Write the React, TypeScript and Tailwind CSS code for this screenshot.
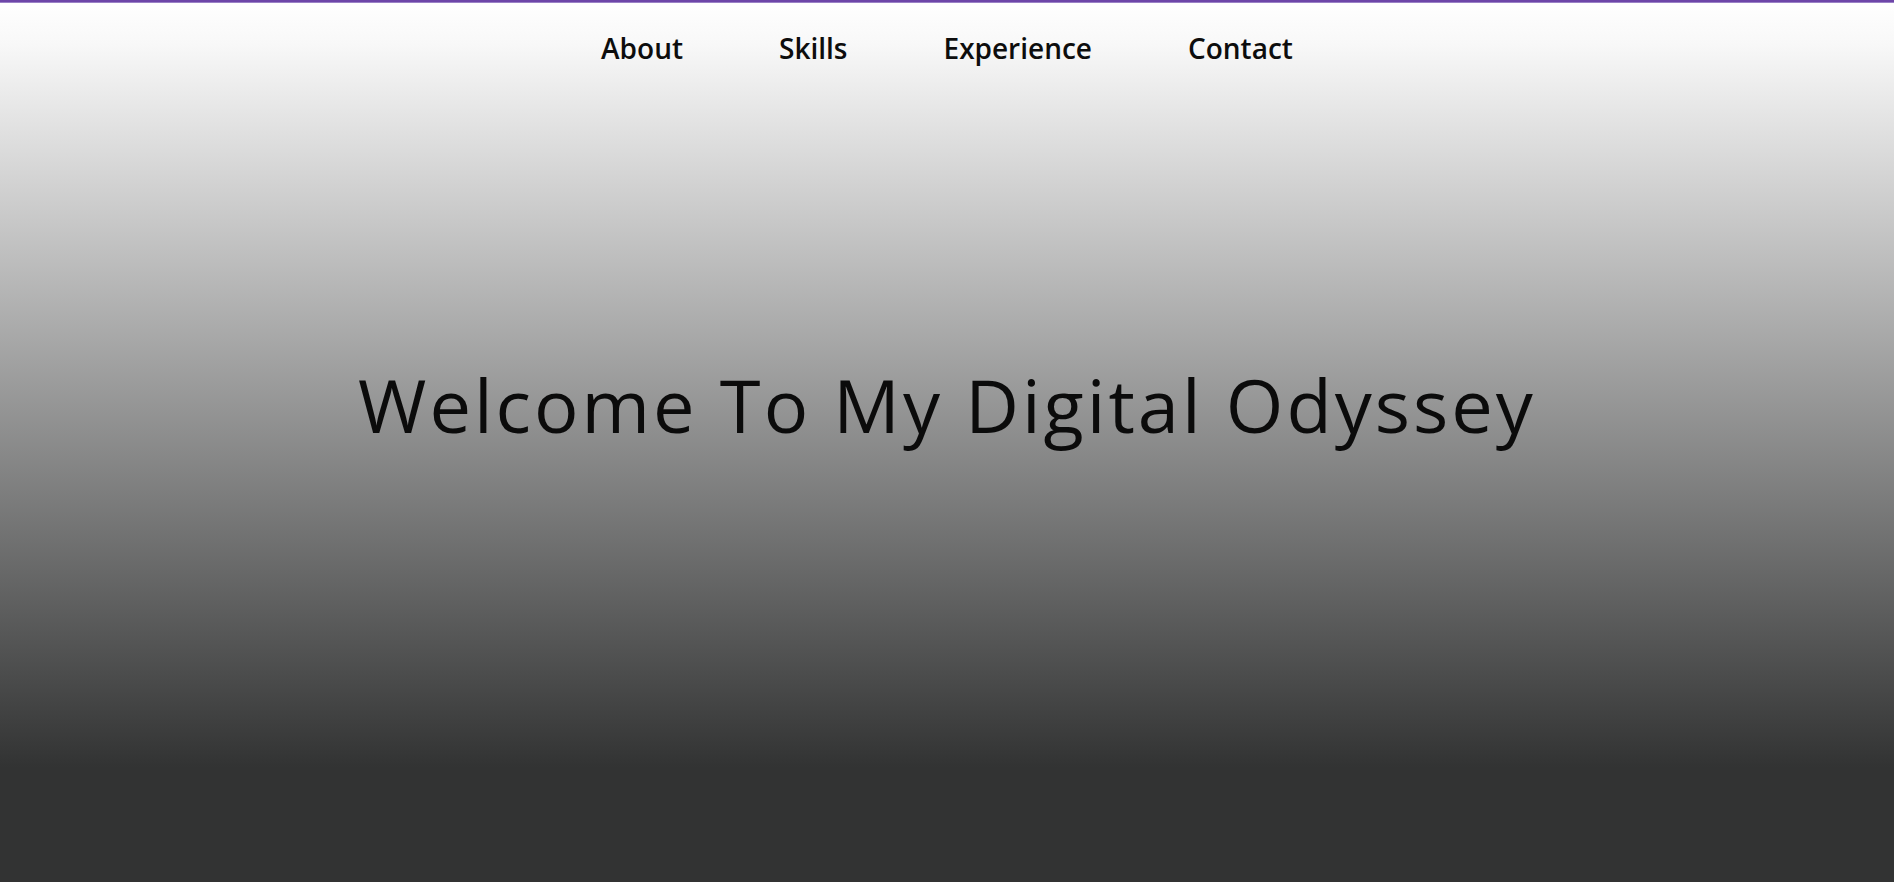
import React from "react";

export default function App() {
  const links = ["About", "Skills", "Experience", "Contact"];
  return (
    <div className="min-h-[882px] w-full flex flex-col bg-[linear-gradient(to_bottom,#ffffff_0%,#f8f8f8_5%,#323333_87%,#323333_100%)]">
      <div className="h-[3px] w-full bg-[#6d45a8] border-b border-[#9a80c6]" />
      <nav className="pt-[25px] flex justify-center gap-[96px] font-['Open_Sans',sans-serif]">
        {links.map((l) => (
          <a key={l} href="#" className="text-[28px] leading-[40px] font-semibold text-[#0d0d0d]">
            {l}
          </a>
        ))}
      </nav>
      <main className="flex justify-center mt-[300px]">
        <h1 className="text-[74px] leading-none font-normal tracking-[3px] text-[#0b0b0b] font-['Open_Sans',sans-serif] whitespace-nowrap">
          Welcome To My Digital Odyssey
        </h1>
      </main>
    </div>
  );
}
